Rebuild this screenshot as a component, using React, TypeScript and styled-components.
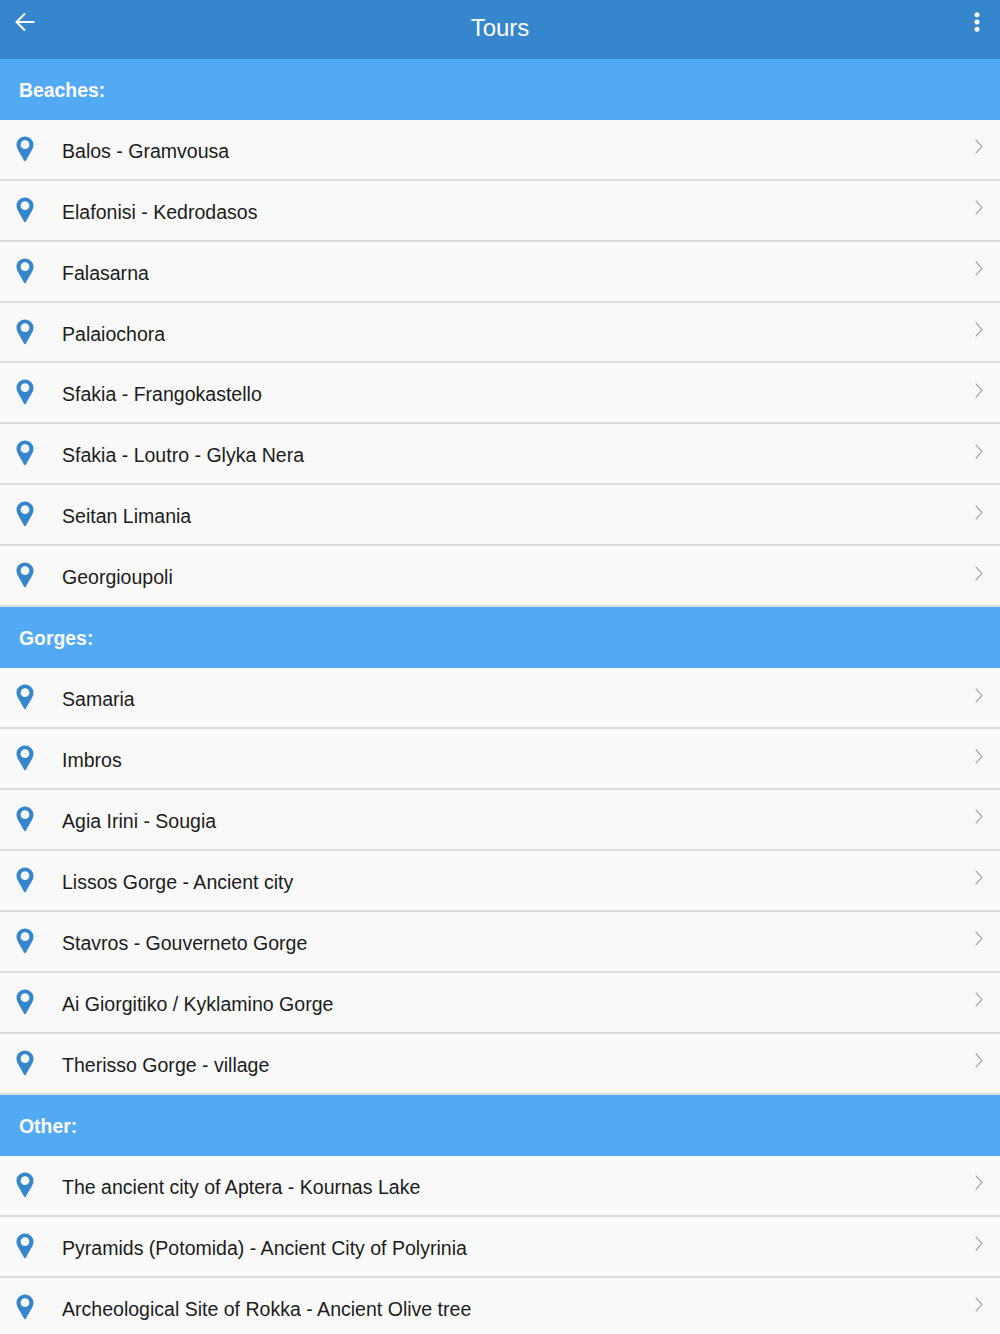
import React from "react";
import styled, { createGlobalStyle } from "styled-components";

const GlobalStyle = createGlobalStyle`
  html, body {
    margin: 0;
    padding: 0;
    background: #f9f9f9;
    font-family: "Liberation Sans", Arial, sans-serif;
  }
`;

const sections = [
  {
    title: "Beaches:",
    tours: [
      "Balos - Gramvousa",
      "Elafonisi - Kedrodasos",
      "Falasarna",
      "Palaiochora",
      "Sfakia - Frangokastello",
      "Sfakia - Loutro - Glyka Nera",
      "Seitan Limania",
      "Georgioupoli",
    ],
  },
  {
    title: "Gorges:",
    tours: [
      "Samaria",
      "Imbros",
      "Agia Irini - Sougia",
      "Lissos Gorge - Ancient city",
      "Stavros - Gouverneto Gorge",
      "Ai Giorgitiko / Kyklamino Gorge",
      "Therisso Gorge - village",
    ],
  },
  {
    title: "Other:",
    tours: [
      "The ancient city of Aptera - Kournas Lake",
      "Pyramids (Potomida) - Ancient City of Polyrinia",
      "Archeological Site of Rokka - Ancient Olive tree",
    ],
  },
];

const BackIcon = () => (
  <svg width="20" height="20" viewBox="0 0 20 20" fill="none" stroke="#fff" strokeWidth="2">
    <path d="M19.5 10H2M10 1.5L1.5 10L10 18.5" />
  </svg>
);

const MenuIcon = () => (
  <svg width="6" height="20" viewBox="0 0 6 20" fill="#fff">
    <circle cx="3" cy="2.7" r="2.5" />
    <circle cx="3" cy="10" r="2.5" />
    <circle cx="3" cy="17.3" r="2.5" />
  </svg>
);

const PinIcon = () => (
  <svg width="18" height="26" viewBox="0 0 18 26">
    <path
      fillRule="evenodd"
      fill="#3586cc"
      d="M9 0.5C4.3 0.5 0.5 4.2 0.5 8.8C0.5 13.5 5.5 19 8 24.6C8.4 25.5 9.6 25.5 10 24.6C12.5 19 17.5 13.5 17.5 8.8C17.5 4.2 13.7 0.5 9 0.5ZM9 4.3A4.4 4.4 0 1 1 9 13.1A4.4 4.4 0 1 1 9 4.3Z"
    />
  </svg>
);

const ChevronIcon = () => (
  <svg width="8" height="15" viewBox="0 0 8 15" fill="none" stroke="#9a9a9a" strokeWidth="1.1">
    <path d="M0.7 0.7L6.9 7.5L0.7 14.3" />
  </svg>
);

const App = () => {
  return (
    <Page>
      <GlobalStyle />
      <TopBar>
        <BackButton>
          <BackIcon />
        </BackButton>
        <Title>Tours</Title>
        <MenuButton>
          <MenuIcon />
        </MenuButton>
      </TopBar>
      {sections.map(section => (
        <section key={section.title}>
          <SectionHeader>{section.title}</SectionHeader>
          {section.tours.map(tour => (
            <Row key={tour}>
              <PinSlot>
                <PinIcon />
              </PinSlot>
              <RowLabel>{tour}</RowLabel>
              <ChevronSlot>
                <ChevronIcon />
              </ChevronSlot>
            </Row>
          ))}
        </section>
      ))}
    </Page>
  );
};

export default App;

const Page = styled.div`
  width: 1000px;
  height: 1334px;
  overflow: hidden;
  background: #f9f9f9;
`;

const TopBar = styled.header`
  height: 58.7px;
  background: #3586cc;
  display: grid;
  grid-template-columns: 50px 1fr 50px;
  box-sizing: border-box;
`;

const BackButton = styled.div`
  padding: 12px 0 0 15px;
  line-height: 0;
`;

const Title = styled.h1`
  margin: 0;
  font-size: 24px;
  font-weight: 400;
  line-height: 56px;
  text-align: center;
  color: #fff;
`;

const MenuButton = styled.div`
  padding: 12px 0 0 24px;
  line-height: 0;
`;

const SectionHeader = styled.h2`
  margin: 0;
  height: 61px;
  padding-left: 19px;
  font-size: 19.4px;
  font-weight: 700;
  line-height: 62px;
  color: #fff;
  background: #52a9f4;
`;

const Row = styled.div`
  height: 60.95px;
  box-sizing: border-box;
  display: flex;
  align-items: flex-start;
  background: #f9f9f9;
  border-bottom: 2px solid #dcdcdc;
`;

const PinSlot = styled.div`
  width: 62px;
  padding: 16px 0 0 16px;
  box-sizing: border-box;
  line-height: 0;
  flex: none;
`;

const RowLabel = styled.span`
  flex: 1;
  font-size: 19.55px;
  line-height: 62.2px;
  color: #1c1c1c;
`;

const ChevronSlot = styled.div`
  width: 25px;
  padding-top: 19.4px;
  line-height: 0;
  flex: none;
`;
